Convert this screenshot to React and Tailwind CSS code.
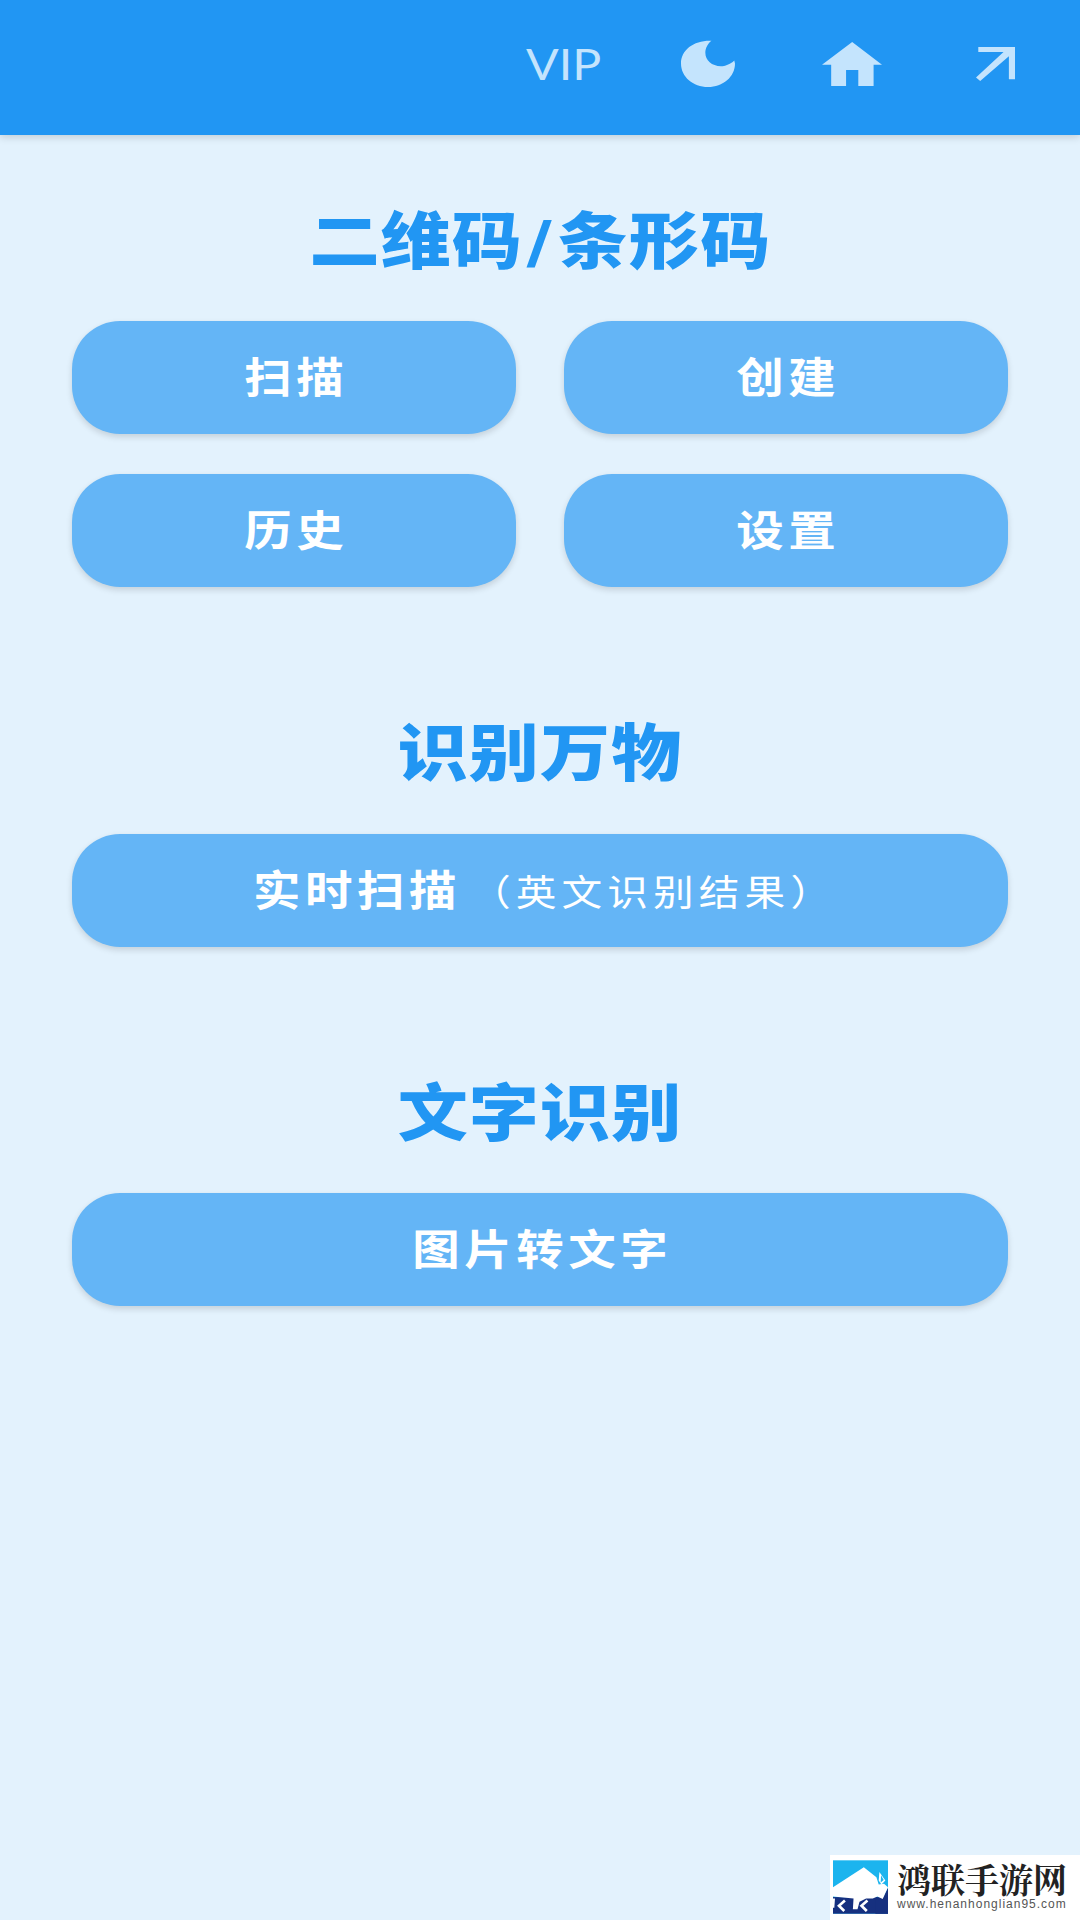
const font = { fontFamily: 'Roboto, "Noto Sans CJK SC", sans-serif' };

function Btn({ children }) {
  return (
    <button className="h-[113px] pt-[2px] rounded-[48px] bg-[#64b5f6] text-white shadow-[0_3px_6px_rgba(0,0,0,0.14)] flex items-center justify-center">
      <span className="inline-block scale-x-[1.13] text-[42px] font-bold tracking-[4px] pl-[4px] whitespace-nowrap">{children}</span>
    </button>
  );
}

function Title({ children, className = "" }) {
  return (
    <h2 className={`text-center text-[#2196f3] text-[62px] leading-[90px] font-black ${className}`}>
      <span className="inline-block scale-x-[1.13] tracking-[1px] pl-[1px] whitespace-nowrap">{children}</span>
    </h2>
  );
}

export default function App() {
  return (
    <div className="w-[1080px] h-[1920px] bg-[#e3f2fd] relative overflow-hidden flex flex-col" style={font}>
      <header className="h-[135px] shrink-0 bg-[#2196f3] shadow-[0_2px_8px_rgba(0,0,0,0.16)] flex items-center justify-end pb-[8px] pr-[65px]">
        <span className="inline-block scale-x-[1.15] text-[42px] leading-none mr-[85px] text-[#c4e4fd]" style={{ fontFamily: "Lato, sans-serif" }}>VIP</span>
        <svg width="54" height="47" viewBox="525 122 142 140" preserveAspectRatio="none" className="mr-[87px]" fill="#c4e4fd">
          <path d="M605 124 C560 122 525 150 525 192 C525 232 557 262 596 262 C635 262 667 232 667 192 L665 183 C655 195 640 200 630 200 C606 200 589 182 589 160 C589 145 596 132 605 124 Z" />
        </svg>
        <svg width="60" height="44" viewBox="893 122 157 133" preserveAspectRatio="none" className="mr-[94px]" fill="#c4e4fd">
          <path d="M972 122 L1050 191 L1028 191 L1028 255 L988 255 L988 207 L956 207 L956 255 L917 255 L917 191 L893 191 Z" />
        </svg>
        <svg width="39" height="34" viewBox="1295 145 102 100" preserveAspectRatio="none" fill="#c4e4fd">
          <path d="M1301 145 L1397 145 L1397 240 L1381 240 L1381 172 L1306 245 L1295 235 L1367 160 L1301 160 Z" />
        </svg>
      </header>
      <main className="flex flex-col px-[72px]">
        <Title className="mt-[63px] mb-[33px]">二维码<span className="mx-[4px]">/</span>条形码</Title>
        <div className="grid grid-cols-2 gap-x-[48px] gap-y-[40px]">
          <Btn>扫描</Btn>
          <Btn>创建</Btn>
          <Btn>历史</Btn>
          <Btn>设置</Btn>
        </div>
        <Title className="mt-[123px] mb-[34px]">识别万物</Title>
        <Btn>
          <span className="ml-[5px]">实时扫描</span>
          <span className="font-normal text-[36px] ml-[8px] tracking-[4.5px]">（英文识别结果）</span>
        </Btn>
        <Title className="mt-[123px] mb-[33px]">文字识别</Title>
        <Btn>图片转文字</Btn>
      </main>
      <div className="absolute right-0 bottom-0 w-[250px] h-[65px] bg-white pt-[5px] pl-[3px] flex">
        <svg width="55" height="54" viewBox="12 17 166 161" className="shrink-0">
          <rect x="12" y="17" width="166" height="161" fill="#1cb4ee" />
          <rect x="12" y="128" width="166" height="50" fill="#16307f" />
          <path d="M178 100 L160 135 L140 128 V178 H178 Z" fill="#16307f" />
          <path d="M12 98 L105 38 L143 68 L150 90 L166 88 L178 98 L162 134 L146 126 L132 132 L112 132 L92 142 L86 165 L72 165 L74 132 L12 126 Z" fill="#fff" />
          <path d="M152 52 L170 78 L158 90 L150 78 Z" fill="#fff" />
          <path d="M157 62 L165 76 L156 84 Z" fill="#1cb4ee" />
          <path d="M14 132 L12 160 M48 138 L30 154 L46 170 M116 138 L98 154 L114 170" fill="none" stroke="#fff" strokeWidth="8" />
        </svg>
        <div className="ml-[9px] flex flex-col">
          <span className="text-[34px] leading-[38px] font-bold text-[#222] whitespace-nowrap" style={{ fontFamily: '"Noto Serif CJK SC", "Noto Sans CJK SC", serif' }}>鸿联手游网</span>
          <span className="text-[12px] leading-[12px] tracking-[1px] text-[#555] whitespace-nowrap" style={{ fontFamily: '"Liberation Sans", sans-serif' }}>www.henanhonglian95.com</span>
        </div>
      </div>
    </div>
  );
}
